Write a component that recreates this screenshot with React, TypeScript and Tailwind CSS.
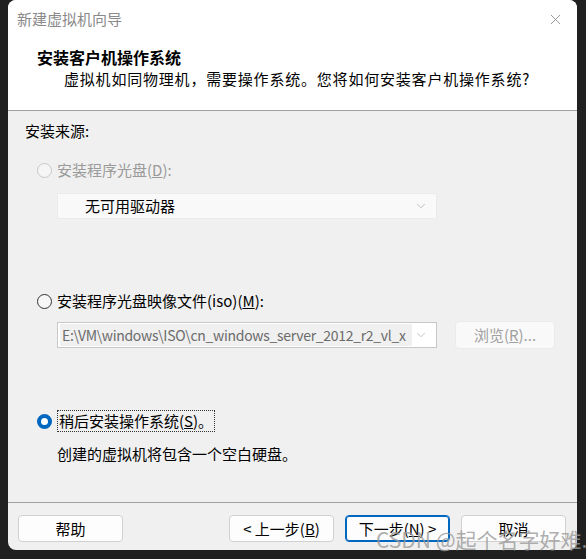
import { ChevronDown, X } from "lucide-react";

const font = { fontFamily: '"Noto Sans CJK SC", "Noto Sans", sans-serif' };

const Radio = ({ state }: { state: "disabled" | "off" | "on" }) => {
  if (state === "on")
    return <span className="w-[15px] h-[15px] rounded-full border-[4px] border-[#0067c0] bg-white shrink-0" />;
  return (
    <span
      className={
        "w-[15px] h-[15px] rounded-full border shrink-0 " +
        (state === "disabled" ? "border-[#c8c8c8] bg-[#f5f5f5]" : "border-[#333333] bg-[#f7f7f7]")
      }
    />
  );
};

const Btn = ({ children, primary }: { children: React.ReactNode; primary?: boolean }) => (
  <button
    className={
      "w-[105px] h-[27px] rounded-[4px] bg-[#fdfdfd] text-[15px] leading-[20px] text-black flex items-center justify-center " +
      (primary ? "border border-[#0067c0] shadow-[inset_0_0_0_1px_#0067c0]" : "border border-[#d0d0d0]")
    }
  >
    {children}
  </button>
);

export default function App() {
  return (
    <div className="w-[586px] h-[559px] bg-[#202020] pl-[8px] relative" style={font}>
      <div className="w-[569px] h-[550px] rounded-[8px] overflow-hidden flex flex-col bg-[#f0f0f0]">
        {/* header */}
        <div className="h-[111px] bg-white border-b border-[#a0a0a0] shrink-0">
          <div className="flex items-center justify-between h-[38px] pl-[9px] pr-[13px]">
            <span className="text-[15px] leading-[20px] text-[#8a8a8a]">新建虚拟机向导</span>
            <X className="w-[17px] h-[17px] text-[#808080]" strokeWidth={1.1} />
          </div>
          <div className="pl-[29px] pt-[8px] text-[16px] leading-[22px] font-bold text-black">安装客户机操作系统</div>
          <div className="pl-[56px] text-[15px] leading-[22px] tracking-[0.8px] text-black">
            虚拟机如同物理机，需要操作系统。您将如何安装客户机操作系统?
          </div>
        </div>

        {/* body */}
        <div className="flex-1 px-[17px] pt-[10px] text-[15px] leading-[20px] text-black">
          <div>安装来源:</div>

          <div className="mt-[19px] flex items-center gap-[5px] pl-[12px] text-[#9a9a9a]">
            <Radio state="disabled" />
            <span>
              安装程序光盘(<span className="underline">D</span>):
            </span>
          </div>
          <div className="mt-[13px] ml-[32px] w-[380px] h-[26px] bg-[#f9f9f9] border border-[#ebebeb] flex items-center pl-[27px] pr-[8px]">
            <span className="flex-1">无可用驱动器</span>
            <ChevronDown className="w-[14px] h-[14px] text-[#a8a8a8]" strokeWidth={1.2} />
          </div>

          <div className="mt-[72px] flex items-center gap-[5px] pl-[12px]">
            <Radio state="off" />
            <span>
              安装程序光盘映像文件(iso)(<span className="underline">M</span>):
            </span>
          </div>
          <div className="mt-[10px] flex items-center gap-[18px]">
            <div className="ml-[32px] w-[380px] h-[26px] bg-white border border-[#c8c8c8] flex items-center pl-[2px] pr-[8px]">
              <span className="w-[352px] h-[22px] bg-[#f0f0f0] text-[#6b6b6b] overflow-hidden whitespace-nowrap leading-[22px] pl-[2px] text-[14px] tracking-[-0.3px]">
                E:\VM\windows\ISO\cn_windows_server_2012_r2_vl_x
              </span>
              <ChevronDown className="ml-auto w-[14px] h-[14px] text-[#a8a8a8]" strokeWidth={1.2} />
            </div>
            <div className="w-[100px] h-[28px] rounded-[4px] bg-[#f9f9f9] border border-[#ebebeb] flex items-center justify-center text-[#a0a0a0]">
              浏览(<span className="underline">R</span>)...
            </div>
          </div>

          <div className="mt-[61px] flex items-center gap-[5px] pl-[12px]">
            <Radio state="on" />
            <span className="border border-dotted border-[#333] px-[1px]">
              稍后安装操作系统(<span className="underline">S</span>)。
            </span>
          </div>
          <div className="mt-[12px] pl-[32px]">创建的虚拟机将包含一个空白硬盘。</div>
        </div>

        {/* footer */}
        <div className="h-[48px] shrink-0 border-t border-[#a0a0a0] flex items-start pt-[12px] pl-[10px] pr-[11px]">
          <Btn>帮助</Btn>
          <div className="ml-auto flex gap-[11px]">
            <Btn>
              &lt; 上一步(<span className="underline">B</span>)
            </Btn>
            <Btn primary>
              下一步(<span className="underline">N</span>) &gt;
            </Btn>
            <Btn>取消</Btn>
          </div>
        </div>
      </div>

      <div className="absolute left-[376px] top-[525px] text-[21px] leading-[28px] text-[#9a9a9a]/80 whitespace-nowrap pointer-events-none">
        CSDN @起个名字好难.
      </div>
    </div>
  );
}
